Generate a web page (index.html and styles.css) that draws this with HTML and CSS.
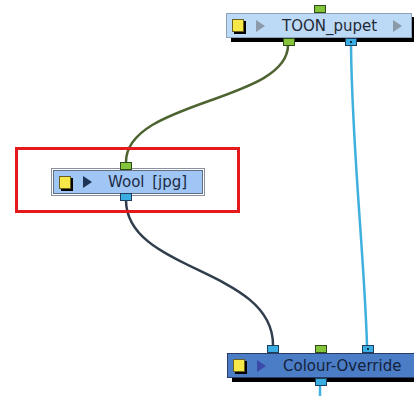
FILE: index.html
```html
<!DOCTYPE html>
<html lang="en">
<head>
  <meta charset="UTF-8" />
  <meta name="viewport" content="width=device-width, initial-scale=1.0" />
  <title>Node View</title>
  <link rel="stylesheet" href="styles.css">
</head>
<body>
  <div class="canvas">
    <svg class="wires" width="414" height="396" viewBox="0 0 414 396">
      <path class="wire wire-green" d="M288,45 C288,102 126,100 126,162" />
      <path class="wire wire-slate" d="M126,200 C126,272 273,268 273,345" />
      <path class="wire wire-cyan" d="M351,45 C352,150 364,250 367,345" />
      <path class="wire wire-cyan" d="M320,385 L320,396" />
    </svg>

    <div class="select-box"></div>

    <!-- TOON_pupet -->
    <div class="node node-toon">
      <span class="swatch"></span>
      <span class="arrow arrow-grey"></span>
      <span class="label">TOON_pupet</span>
      <span class="arrow arrow-grey arrow-end"></span>
    </div>
    <span class="port port-green" style="left:314px;top:5px"></span>
    <span class="port port-green" style="left:283px;top:38px"></span>
    <span class="port port-blue dot" style="left:345px;top:38px"></span>

    <!-- Wool -->
    <div class="node node-wool">
      <span class="swatch"></span>
      <span class="arrow arrow-navy"></span>
      <span class="label label-wool">Wool [jpg]</span>
    </div>
    <span class="port port-green" style="left:120px;top:162px"></span>
    <span class="port port-blue" style="left:120px;top:193px"></span>

    <!-- Colour-Override -->
    <div class="node node-override">
      <span class="swatch"></span>
      <span class="arrow arrow-violet"></span>
      <span class="label">Colour-Override</span>
    </div>
    <span class="port port-blue" style="left:267px;top:345px"></span>
    <span class="port port-green" style="left:315px;top:345px"></span>
    <span class="port port-blue dot" style="left:362px;top:345px"></span>
    <span class="port port-blue" style="left:315px;top:378px"></span>
  </div>
</body>
</html>
```

FILE: styles.css
```css
html, body {
  margin: 0;
  padding: 0;
  background-color: #fff;
}
.canvas {
  position: relative;
  width: 414px;
  height: 396px;
  overflow: hidden;
  font-family: "DejaVu Sans", Verdana, sans-serif;
}
.wires {
  position: absolute;
  left: 0;
  top: 0;
}
.wire {
  fill: none;
  stroke-width: 2.5;
}
.wire-green {
  stroke: #4d6430;
}
.wire-slate {
  stroke: #2f3d4c;
}
.wire-cyan {
  stroke: #3fb0de;
}
.select-box {
  position: absolute;
  left: 15px;
  top: 147px;
  width: 219px;
  height: 60px;
  border: 3px solid #e3191c;
}
.node {
  position: absolute;
  display: flex;
  align-items: center;
  box-sizing: border-box;
  height: 25px;
  padding-left: 5px;
  font-size: 15px;
}
.node-toon {
  left: 226px;
  top: 13px;
  width: 186px;
  background-color: #bcd9f6;
  border: 1px solid #8da2b8;
  box-shadow: 5px 4px 0 #000;
  color: #1f2a36;
}
.node-wool {
  left: 53px;
  top: 170px;
  width: 150px;
  height: 24px;
  background-color: #9fc6f5;
  border: 1px solid #606e80;
  outline: 1px solid #8890a0;
  outline-offset: 1px;
  color: #1c2a44;
}
.node-override {
  left: 227px;
  top: 353px;
  width: 190px;
  background-color: #4a7dc6;
  border: 1px solid #2a3c66;
  box-shadow: 5px 4px 0 #000;
  color: #15223c;
}
.swatch {
  width: 10px;
  height: 11px;
  background-color: #f7e84a;
  border: 1px solid #6a6020;
  box-shadow: 2px 2px 0 #000;
  flex-shrink: 0;
}
.arrow {
  width: 0;
  height: 0;
  margin-left: 12px;
  border-top: 6px solid transparent;
  border-bottom: 6px solid transparent;
  border-left: 9px solid #8b9aa8;
}
.arrow-navy {
  border-left-color: #1e3456;
}
.arrow-violet {
  border-left-color: #3a4aa8;
}
.arrow-end {
  margin-left: auto;
  margin-right: 9px;
}
.label {
  margin-left: 17px;
  white-space: nowrap;
}
.label-wool {
  margin-left: 16px;
  word-spacing: 3px;
}
.port {
  position: absolute;
  box-sizing: border-box;
  width: 12px;
  height: 8px;
  border: 1px solid #2f4a18;
}
.port-green {
  background-color: #84c43a;
}
.port-blue {
  background-color: #3aaee2;
  border-color: #1d3e5c;
}
.dot::after {
  content: "";
  position: absolute;
  left: 4px;
  top: 2px;
  width: 2px;
  height: 2px;
  background-color: #12304a;
}
```
